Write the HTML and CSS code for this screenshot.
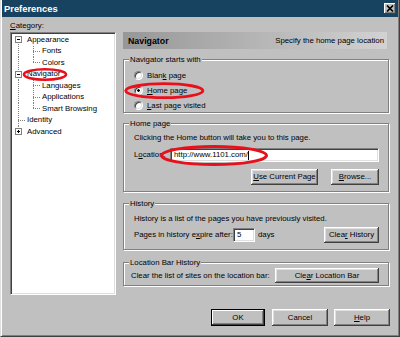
FILE: index.html
```html
<!DOCTYPE html>
<html lang="en">

<head>
    <meta charset="UTF-8">
    <title>Preferences</title>
    <link rel="stylesheet" href="styles.css">
</head>

<body>
    <div class="window">
        <div class="titlebar">
            <span class="title">Preferences</span>
            <span class="close">
                <svg width="8" height="7" viewBox="0 0 8 7"><path d="M1 0.5 L7 6.5 M7 0.5 L1 6.5" stroke="#000" stroke-width="1.7"/></svg>
            </span>
        </div>

        <div class="main">
            <div class="sidebar">
                <div class="caption"><u>C</u>ategory:</div>
                <div class="tree">
                    <div class="row first"><span class="toggle"></span>Appearance</div>
                    <div class="row child">Fonts</div>
                    <div class="row child last">Colors</div>
                    <div class="row mid"><span class="toggle"></span>Navigator</div>
                    <div class="row child">Languages</div>
                    <div class="row child">Applications</div>
                    <div class="row child last">Smart Browsing</div>
                    <div class="row leaf">Identity</div>
                    <div class="row final"><span class="toggle plus"></span>Advanced</div>
                </div>
            </div>

            <div class="panel">
                <div class="panel-head">
                    <b>Navigator</b>
                    <span>Specify the home page location</span>
                </div>

                <fieldset class="group starts">
                    <legend>Navigator starts with</legend>
                    <div class="radio-row"><span class="radio"></span><span>Blan<u>k</u> page</span></div>
                    <div class="radio-row"><span class="radio checked"></span><span><u>H</u>ome page</span></div>
                    <div class="radio-row"><span class="radio"></span><span><u>L</u>ast page visited</span></div>
                </fieldset>

                <fieldset class="group home">
                    <legend>Home page</legend>
                    <div class="line">Clicking the Home button will take you to this page.</div>
                    <div class="location-row">
                        <span class="location-label">L<u>o</u>cation:</span>
                        <div class="field wide"><span>http://www.1101.com/</span><span class="caret"></span></div>
                    </div>
                    <div class="button-row">
                        <button class="btn current"><u>U</u>se Current Page</button>
                        <button class="btn browse"><u>B</u>rowse...</button>
                    </div>
                </fieldset>

                <fieldset class="group history">
                    <legend>History</legend>
                    <div class="line">History is a list of the pages you have previously visited.</div>
                    <div class="expire-row">
                        <span class="expire-label">Pages in history e<u>x</u>pire after:</span>
                        <div class="field days-field">5</div>
                        <span class="days">days</span>
                        <button class="btn clear-history">Clea<u>r</u> History</button>
                    </div>
                </fieldset>

                <fieldset class="group locbar">
                    <legend>Location Bar History</legend>
                    <div class="locbar-row">
                        <span>Clear the list of sites on the location bar:</span>
                        <button class="btn clear-locbar">Cle<u>a</u>r Location Bar</button>
                    </div>
                </fieldset>
            </div>
        </div>

        <div class="footer">
            <button class="btn default">OK</button>
            <button class="btn">Cancel</button>
            <button class="btn"><u>H</u>elp</button>
        </div>

        <!-- red annotation marks drawn over the dialog -->
        <svg class="marks" width="400" height="337" viewBox="0 0 400 337">
            <ellipse cx="45" cy="74.5" rx="21" ry="5.2" fill="none" stroke="#e8101a" stroke-width="2.6"/>
            <ellipse cx="164.3" cy="90.7" rx="38.6" ry="7" fill="none" stroke="#e8101a" stroke-width="2.8"/>
            <ellipse cx="214" cy="155.5" rx="52.5" ry="9" fill="none" stroke="#e8101a" stroke-width="3"/>
        </svg>
    </div>
</body>

</html>
```

FILE: styles.css
```css
body {
    margin: 0;
    font-family: "Liberation Sans", Arial, sans-serif;
    font-size: 7.8px;
    line-height: 10px;
    color: #000;
    background: #c0c0c0;
}

u {
    text-decoration: underline;
    text-underline-offset: 1px;
}

.window {
    position: relative;
    width: 400px;
    height: 337px;
    box-sizing: border-box;
    background: #c0c0c0;
    border: 1px solid;
    border-top: 0;
    border-color: #dfdfdf #404040 #404040 #dfdfdf;
    box-shadow: inset 1px 0 #fff, inset -1px -1px #808080;
    display: flex;
    flex-direction: column;
}

.titlebar {
    height: 17px;
    margin: 0 1px;
    background: #174360;
    display: flex;
    align-items: center;
    justify-content: space-between;
    padding-left: 2px;
}

.title {
    color: #fff;
    font-weight: bold;
    font-size: 9.4px;
}

.close {
    width: 12px;
    height: 11px;
    margin-right: 2px;
    box-sizing: border-box;
    background: #c0c0c0;
    display: flex;
    align-items: center;
    justify-content: center;
    box-shadow: inset -1px -1px #404040, inset 1px 1px #fff, inset -2px -2px #808080;
}

.main {
    display: flex;
    padding: 4px 10px 0 9px;
}

.sidebar {
    width: 106px;
}

.caption {
    height: 10px;
    margin-bottom: 1px;
}

.tree {
    --v: repeating-linear-gradient(#808080 0 1px, transparent 1px 2px);
    --h: repeating-linear-gradient(to right, #808080 0 1px, transparent 1px 2px);
    height: 263px;
    box-sizing: border-box;
    background: #fff;
    border: 1px solid;
    border-color: #808080 #fff #fff #808080;
    box-shadow: inset 1px 1px #404040, inset -1px -1px #dfdfdf;
    padding: 1px;
}

.row {
    height: 11.5px;
    display: flex;
    align-items: center;
    padding-left: 3px;
    white-space: nowrap;
    background-repeat: no-repeat;
}

.row.first {
    background-image: var(--v);
    background-position: 6px 6px;
    background-size: 1px 6px;
}

.row.mid {
    background-image: var(--v);
    background-position: 6px 0;
    background-size: 1px 100%;
}

.row.leaf {
    padding-left: 15px;
    background-image: var(--v), var(--h);
    background-position: 6px 0, 6px 5px;
    background-size: 1px 100%, 7px 1px;
}

.row.final {
    background-image: var(--v);
    background-position: 6px 0;
    background-size: 1px 6px;
}

.row.child {
    padding-left: 30px;
    background-image: var(--v), var(--v), var(--h);
    background-position: 6px 0, 21px 0, 21px 5px;
    background-size: 1px 100%, 1px 100%, 8px 1px;
}

.row.child.last {
    background-size: 1px 100%, 1px 6px, 8px 1px;
}

.toggle {
    width: 7px;
    height: 7px;
    box-sizing: border-box;
    margin-right: 5px;
    border: 1px solid #808080;
    background: linear-gradient(#000, #000) center / 3px 1px no-repeat, #fff;
}

.toggle.plus {
    background: linear-gradient(#000, #000) center / 3px 1px no-repeat,
        linear-gradient(#000, #000) center / 1px 3px no-repeat, #fff;
}

.panel {
    flex: 1;
    margin-left: 7px;
    margin-top: 11px;
    display: flex;
    flex-direction: column;
}

.panel-head {
    height: 17px;
    margin-right: 2px;
    padding: 0 3px 0 5px;
    display: flex;
    align-items: center;
    justify-content: space-between;
    background: linear-gradient(to right, #979797, #d2d2d2);
}

.panel-head b {
    font-size: 8.8px;
}

.group {
    margin: 0;
    padding: 0 9px 0 10px;
    border: 1px solid #808080;
    box-shadow: 1px 1px #fff, inset 1px 1px #fff;
    min-width: 0;
}

.group legend {
    line-height: 11px;
    padding: 0 1px;
    margin-left: -5px;
    background: #c0c0c0;
}

.starts {
    margin-top: 5px;
    padding-top: 4px;
    display: flex;
    flex-direction: column;
    gap: 2px;
}

.radio-row {
    height: 13px;
    display: flex;
    align-items: center;
}

.radio {
    width: 9px;
    height: 9px;
    box-sizing: border-box;
    margin-right: 4px;
    border-radius: 50%;
    background: #fff;
    border: 1px solid;
    border-color: #808080 #fff #fff #808080;
    box-shadow: inset 1px 1px #404040, inset -1px -1px #dfdfdf;
}

.radio.checked {
    background: radial-gradient(circle, #000 0 1.2px, #fff 1.5px);
}

.home {
    margin-top: 5px;
    padding-top: 4px;
    padding-bottom: 6px;
}

.location-row {
    margin-top: 5px;
    display: flex;
    align-items: center;
}

.location-label {
    width: 36px;
}

.field {
    height: 14px;
    box-sizing: border-box;
    background: #fff;
    border: 1px solid;
    border-color: #808080 #fff #fff #808080;
    box-shadow: inset 1px 1px #404040, inset -1px -1px #dfdfdf;
    padding: 0 3px;
    display: flex;
    align-items: center;
}

.field.wide {
    flex: 1;
}

.caret {
    width: 1px;
    height: 9px;
    background: #000;
}

.button-row {
    margin-top: 7px;
    display: flex;
    justify-content: flex-end;
    gap: 13px;
}

.btn {
    appearance: none;
    height: 16px;
    padding: 0;
    font: inherit;
    color: #000;
    background: #c0c0c0;
    border: 0;
    box-shadow: inset -1px -1px #404040, inset 1px 1px #fff, inset -2px -2px #808080, inset 2px 2px #dfdfdf;
}

.btn.current {
    width: 67px;
}

.btn.browse {
    width: 48px;
}

.history {
    margin-top: 6px;
    padding-top: 5px;
    padding-bottom: 6px;
}

.expire-row {
    margin-top: 3px;
    display: flex;
    align-items: center;
}

.expire-label {
    width: 99px;
}

.days-field {
    width: 22px;
}

.days {
    margin-left: 3px;
}

.btn.clear-history {
    width: 55px;
    margin-left: auto;
}

.locbar {
    margin-top: 7px;
    padding-left: 7px;
    padding-bottom: 2px;
}

.locbar legend {
    margin-left: -2px;
}

.locbar-row {
    height: 15px;
    display: flex;
    align-items: center;
    justify-content: space-between;
}

.btn.clear-locbar {
    width: 104px;
    height: 15px;
}

.footer {
    margin-top: auto;
    padding: 0 9px 10px 0;
    display: flex;
    justify-content: flex-end;
    gap: 6px;
}

.footer .btn {
    width: 56px;
    height: 17px;
}

.footer .btn.default {
    width: 54px;
    margin-right: 1px;
    box-shadow: inset 0 0 0 1px #000, inset -2px -2px #404040, inset 2px 2px #fff, inset -3px -3px #808080;
}

.marks {
    position: absolute;
    top: 0;
    left: -1px;
    pointer-events: none;
}
```
